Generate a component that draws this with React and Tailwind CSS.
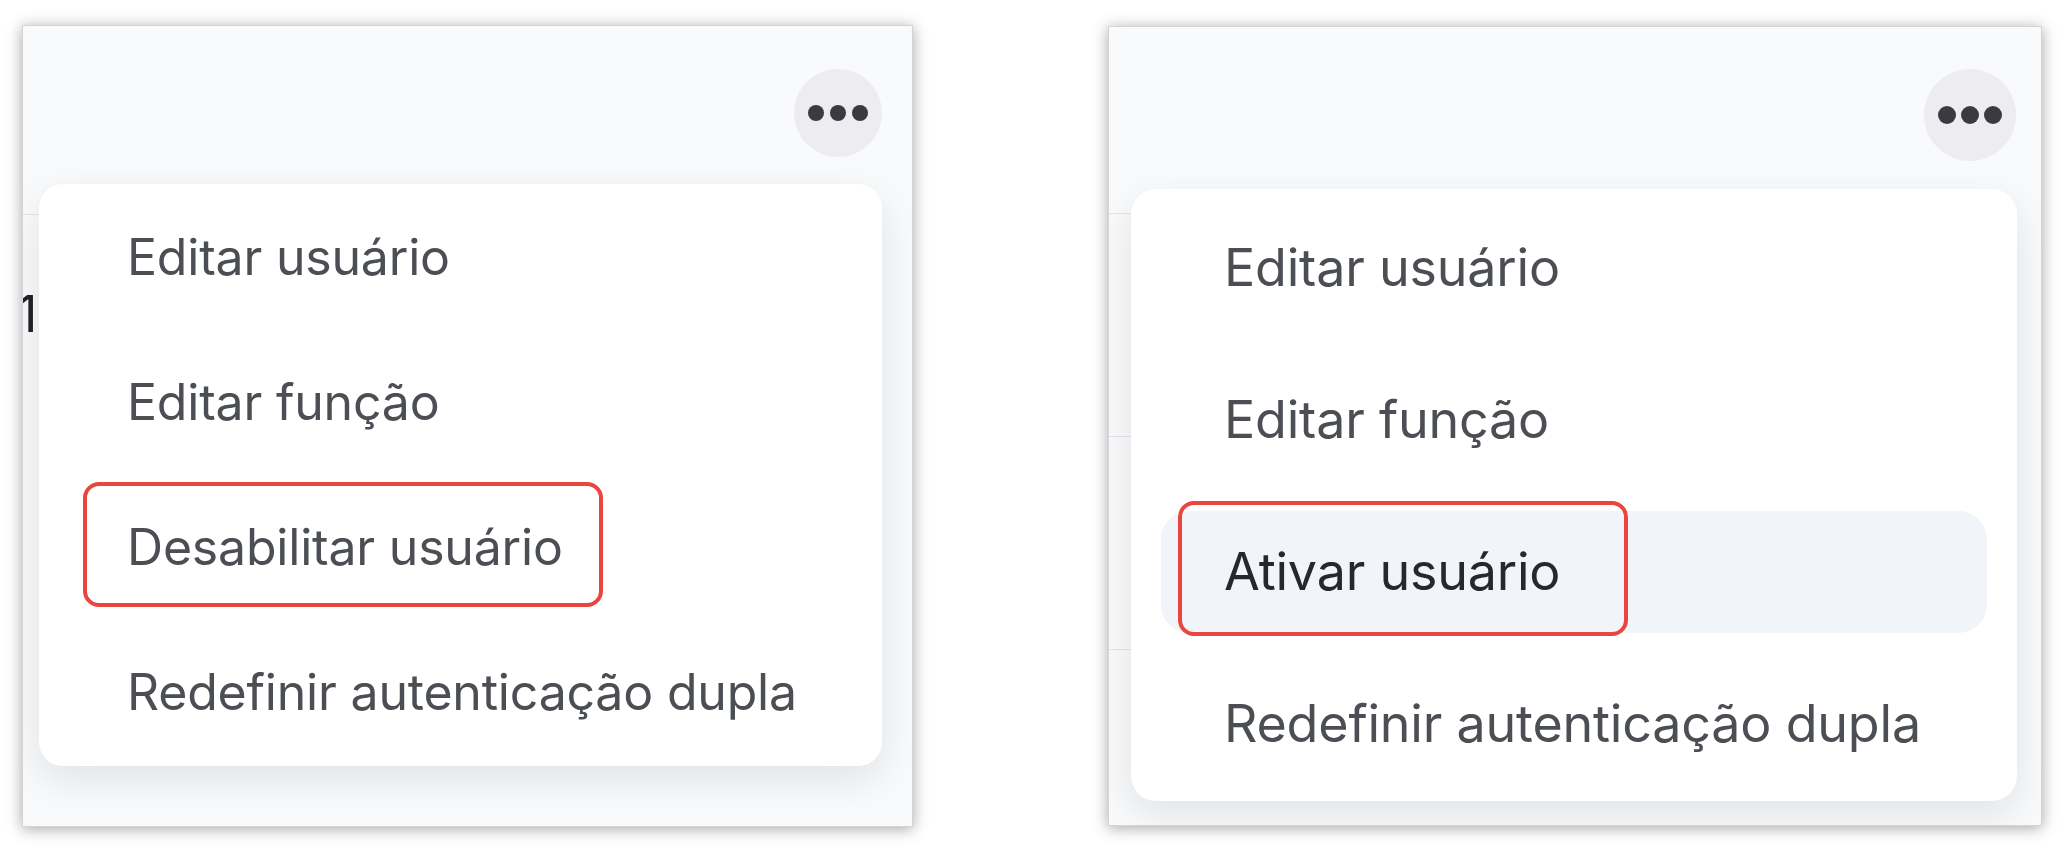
import React from "react";

const font = { fontFamily: "Inter, 'Noto Sans', 'Liberation Sans', sans-serif" };

function Dots({ size, gap }) {
  return (
    <div className={`flex items-center ${gap}`}>
      <span className={`${size} rounded-full bg-[#3a3b40]`} />
      <span className={`${size} rounded-full bg-[#3a3b40]`} />
      <span className={`${size} rounded-full bg-[#3a3b40]`} />
    </div>
  );
}

function LeftPanel() {
  const items = ["Editar usuário", "Editar função", "Desabilitar usuário", "Redefinir autenticação dupla"];
  return (
    <div className="relative mt-[25px] ml-[22px] h-[802px] w-[891px] shrink-0 overflow-hidden border border-[#d4d4d6] bg-[#f9fafb] shadow-[0_2px_14px_rgba(0,0,0,0.35)]">
      <div className="flex h-[188px] items-start justify-end pt-[43px] pr-[30px]">
        <button className="flex h-[88px] w-[88px] items-center justify-center rounded-full bg-[#ececf1]">
          <Dots size="h-[16px] w-[16px]" gap="gap-[6px]" />
        </button>
      </div>
      <div className="mr-[120px] h-[218px] border-t border-[#e3e5e8]">
        <div className="ml-[-6px] mt-[74px] text-[50px] leading-none text-[#222326]">10</div>
      </div>
      <div className="absolute left-[16px] right-[30px] top-[158px] flex flex-col gap-[29px] rounded-[24px] bg-white px-[28px] pt-[15px] pb-[16px] shadow-[0_14px_40px_rgba(15,23,42,0.10)]">
        {items.map((t, i) => (
          <div key={t} className="relative flex h-[116px] items-center pl-[60px] text-[50px] leading-none tracking-[-0.2px] text-[#4b4e53]">
            {t}
            {i === 2 && (
              <div className="absolute left-[16px] top-[-7px] h-[125px] w-[520px] rounded-[16px] border-[4px] border-[#e8463e]" />
            )}
          </div>
        ))}
      </div>
    </div>
  );
}

function RightPanel() {
  const items = ["Editar usuário", "Editar função", "Ativar usuário", "Redefinir autenticação dupla"];
  return (
    <div className="relative mt-[26px] ml-[195px] h-[800px] w-[934px] shrink-0 overflow-hidden border border-[#d4d4d6] bg-[#f9fafb] shadow-[0_2px_14px_rgba(0,0,0,0.35)]">
      <div className="flex h-[186px] items-start justify-end pt-[42px] pr-[25px]">
        <button className="flex h-[92px] w-[92px] items-center justify-center rounded-full bg-[#ececf1]">
          <Dots size="h-[18px] w-[18px]" gap="gap-[5px]" />
        </button>
      </div>
      <div className="mr-[120px]">
        <div className="h-[223px] border-t border-[#e3e5e8]" />
        <div className="h-[213px] border-t border-[#e3e5e8]" />
        <div className="h-[200px] border-t border-[#e3e5e8]" />
      </div>
      <div className="absolute left-[22px] right-[24px] top-[162px] flex flex-col gap-[30px] rounded-[25px] bg-white px-[30px] pt-[18px] pb-[16px] shadow-[0_14px_40px_rgba(15,23,42,0.10)]">
        {items.map((t, i) => (
          <div
            key={t}
            className={`relative flex h-[122px] items-center pl-[63px] text-[52px] leading-none tracking-[-0.2px] ${
              i === 2 ? "rounded-[28px] bg-[#f1f4f8] text-[#25282d]" : "text-[#4b4e53]"
            }`}
          >
            {t}
            {i === 2 && (
              <div className="absolute left-[17px] top-[-10px] h-[135px] w-[450px] rounded-[16px] border-[4px] border-[#e8463e]" />
            )}
          </div>
        ))}
      </div>
    </div>
  );
}

export default function App() {
  return (
    <div className="flex h-[854px] w-[2070px] items-start bg-white" style={font}>
      <LeftPanel />
      <RightPanel />
    </div>
  );
}
